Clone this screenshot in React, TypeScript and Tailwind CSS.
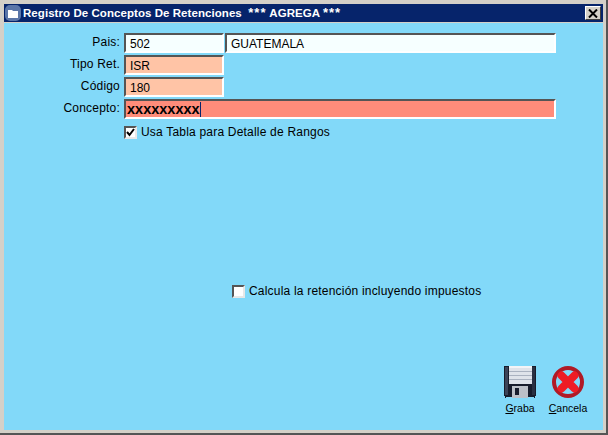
function Field({ w, bg, children, bold }: { w: string; bg: string; children?: React.ReactNode; bold?: boolean }) {
  return (
    <div className={`${w} ${bg} h-[20px] border-2 border-t-[#555555] border-l-[#555555] border-r-white border-b-white flex items-center text-black leading-none ${bold ? "font-bold text-[14.5px] pl-[1px]" : "text-[12px] pl-1 pt-[2px]"}`}>
      {children}
    </div>
  );
}

function Row({ label, children }: { label: string; children: React.ReactNode }) {
  return (
    <div className="flex h-[20px] gap-[4px]">
      <div className="w-[116px] text-right text-[12px] leading-[18px] text-black tracking-[0.2px]">{label}</div>
      <div className="flex gap-[1px]">{children}</div>
    </div>
  );
}

function Box({ checked }: { checked?: boolean }) {
  return (
    <div className="w-[13px] h-[13px] bg-white border-2 border-t-[#555555] border-l-[#555555] border-r-[#e8e8e8] border-b-[#e8e8e8] flex items-center justify-center shrink-0">
      {checked && (
        <svg width="9" height="9" viewBox="0 0 9 9">
          <path d="M1 4 L3.5 7 L8 1" fill="none" stroke="#000" strokeWidth="2" />
        </svg>
      )}
    </div>
  );
}

export default function App() {
  return (
    <div
      className="w-[608px] h-[435px] bg-[#d4d0c8] pt-[4px] pl-[4px] pr-[3px] pb-[3px] flex flex-col overflow-hidden border-b-2 border-r-2 border-[#555555]"
      style={{ fontFamily: '"Liberation Sans", Arial, sans-serif' }}
    >
      <div className="h-[18px] bg-[#06246b] flex items-center text-white shrink-0 pr-[2px]">
        <div className="w-[16px] h-[16px] rounded-[5px] bg-[#5b76a8] flex items-center justify-center ml-[1px]">
          <svg width="10" height="9" viewBox="0 0 10 9">
            <path d="M0 1 H4 L5 2 H10 V9 H0 Z" fill="#fff" />
          </svg>
        </div>
        <div className="ml-[2px] text-[11.5px] font-bold leading-none whitespace-pre tracking-[0.06px]">
          Registro De Conceptos De Retenciones  <span className="text-[13px] tracking-[1px]">***</span> AGREGA <span className="text-[13px] tracking-[1px]">***</span>
        </div>
        <div className="ml-auto w-[16px] h-[14px] bg-[#d4d0c8] border border-t-white border-l-white border-r-[#404040] border-b-[#404040] flex items-center justify-center">
          <svg width="10" height="9" viewBox="0 0 10 9">
            <path d="M1 0.5 L9 8.5 M9 0.5 L1 8.5" stroke="#000" strokeWidth="2" />
          </svg>
        </div>
      </div>
      <div className="mt-[1px] flex-1 bg-[#82d9f9] flex flex-col pt-[10px] text-black">
        <div className="flex flex-col gap-[2px]">
          <Row label="Pais:">
            <Field w="w-[100px]" bg="bg-[#f6ffff]">502</Field>
            <Field w="w-[331px]" bg="bg-[#f6ffff]">GUATEMALA</Field>
          </Row>
          <Row label="Tipo Ret.">
            <Field w="w-[100px]" bg="bg-[#ffc4a6]">ISR</Field>
          </Row>
          <Row label="Código">
            <Field w="w-[100px]" bg="bg-[#ffc4a6]">180</Field>
          </Row>
          <Row label="Concepto:">
            <Field w="w-[432px]" bg="bg-[#ff8c7a]" bold>
              xxxxxxxxx<span className="w-px h-[15px] bg-[#06246b]" />
            </Field>
          </Row>
        </div>
        <div className="flex items-center gap-[4px] ml-[120px] mt-[6px] h-[14px] text-[12px] tracking-[0.2px]">
          <Box checked />
          <span>Usa Tabla para Detalle de Rangos</span>
        </div>
        <div className="flex items-center gap-[4px] ml-[228px] mt-[145px] h-[14px] text-[12px] tracking-[0.2px]">
          <Box />
          <span>Calcula la retención incluyendo impuestos</span>
        </div>
        <div className="flex justify-end gap-[12px] pr-[16px] mt-[68px]">
          <div className="flex flex-col items-center w-[34px]">
            <svg width="32" height="32" viewBox="0 0 32 32" shapeRendering="crispEdges">
              <path d="M0 0 H32 V30 H31 V32 H30 V31 H2 V32 H1 V30 H0 Z" fill="#171c2c" />
              <path d="M1 1 H4 V29 H1 Z" fill="#3c4458" />
              <path d="M28 1 H31 V29 H28 Z" fill="#2a3042" />
              <path d="M5 0 H28 V18 H5 Z" fill="#dfe3ea" />
              <path d="M5 0 H28 V2 H5 Z" fill="#f2f4f7" />
              <path d="M5 5 H28 V6 H5 Z M5 9 H28 V10 H5 Z M5 13 H28 V14 H5 Z" fill="#aab2c0" />
              <path d="M8 20 H24 V32 H8 Z" fill="#bcc0c8" />
              <path d="M11 22 H15 V29 H11 Z" fill="#171c2c" />
            </svg>
            <span className="mt-[3px] text-[10.5px] leading-[14px]"><span className="underline">G</span>raba</span>
          </div>
          <div className="flex flex-col items-center w-[38px]">
            <svg width="32" height="32" viewBox="0 0 32 32">
              <circle cx="16" cy="16" r="14" fill="none" stroke="#b01a26" strokeWidth="4" />
              <path d="M9.5 9.5 L22.5 22.5 M22.5 9.5 L9.5 22.5" stroke="#ee1c25" strokeWidth="8" strokeLinecap="round" />
            </svg>
            <span className="mt-[3px] text-[10.5px] leading-[14px]"><span className="underline">C</span>ancela</span>
          </div>
        </div>
      </div>
    </div>
  );
}
